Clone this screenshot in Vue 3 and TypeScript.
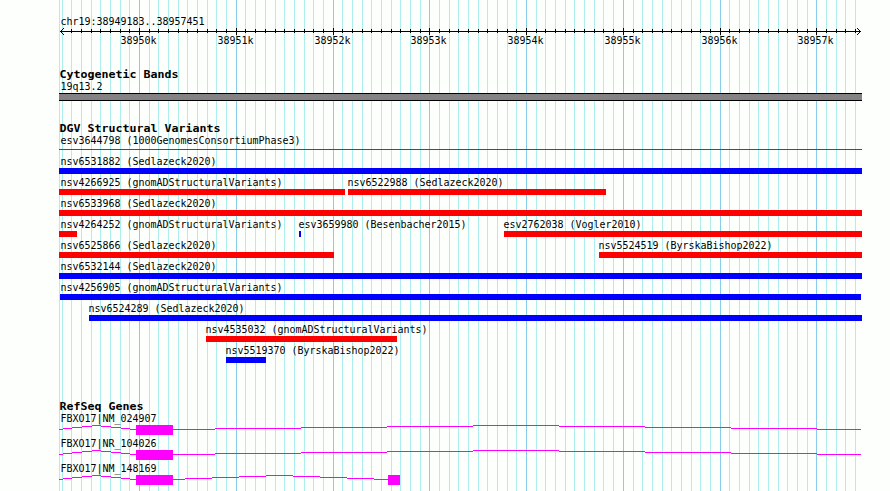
<script setup lang="ts">
interface Feature {
  label: string
  start: number
  end: number
  color: string
}

interface Gene {
  label: string
  exons: [number, number][]
  introns: [number, number][]
}

const regionStart = 38949183
const regionEnd = 38957451
const left = 60
const scale = 800 / (regionEnd - regionStart)

const toX = (pos: number) => Math.round(left + (pos - regionStart) * scale)

const ticks: { x: number; major: boolean; label: string }[] = []
for (let pos = 38949200; pos <= regionEnd; pos += 100) {
  ticks.push({ x: toX(pos), major: pos % 1000 === 0, label: `${pos / 1000}k` })
}
const majorTicks = ticks.filter((t) => t.major)

const BLUE = '#0000ff'
const RED = '#ff0000'

const variantRows: Feature[][] = [
  [{ label: 'nsv6531882 (Sedlazeck2020)', start: 59, end: 862, color: BLUE }],
  [
    { label: 'nsv4266925 (gnomADStructuralVariants)', start: 59, end: 345, color: RED },
    { label: 'nsv6522988 (Sedlazeck2020)', start: 348, end: 606, color: RED },
  ],
  [{ label: 'nsv6533968 (Sedlazeck2020)', start: 59, end: 862, color: RED }],
  [
    { label: 'nsv4264252 (gnomADStructuralVariants)', start: 59, end: 77, color: RED },
    { label: 'esv3659980 (Besenbacher2015)', start: 299, end: 301, color: BLUE },
    { label: 'esv2762038 (Vogler2010)', start: 504, end: 862, color: RED },
  ],
  [
    { label: 'nsv6525866 (Sedlazeck2020)', start: 59, end: 334, color: RED },
    { label: 'nsv5524519 (ByrskaBishop2022)', start: 599, end: 862, color: RED },
  ],
  [{ label: 'nsv6532144 (Sedlazeck2020)', start: 59, end: 862, color: BLUE }],
  [{ label: 'nsv4256905 (gnomADStructuralVariants)', start: 60, end: 861, color: BLUE }],
  [{ label: 'nsv6524289 (Sedlazeck2020)', start: 89, end: 862, color: BLUE }],
  [{ label: 'nsv4535032 (gnomADStructuralVariants)', start: 206, end: 397, color: RED }],
  [{ label: 'nsv5519370 (ByrskaBishop2022)', start: 226, end: 266, color: BLUE }],
]

const genes: Gene[] = [
  { label: 'FBXO17|NM_024907', exons: [[136, 173]], introns: [[59, 136], [173, 861]] },
  { label: 'FBXO17|NR_104026', exons: [[136, 173]], introns: [[59, 136], [173, 861]] },
  { label: 'FBXO17|NM_148169', exons: [[136, 173], [388, 400]], introns: [[59, 136], [173, 388]] },
]

const labelX = (f: Feature) => (f.start <= 60 ? 60.5 : f.start - 0.5)

// introns are drawn as a shallow hat, 4px high, in whole pixel steps
const hat = ([from, to]: [number, number], base: number) => {
  const half = (to - from) / 2
  const levels = [0, 1, 2, 3, 4, 3, 2, 1, 0]
  let x = from
  return levels
    .map((level, i) => {
      const next = i === 8 ? to : Math.round(from + (half * (2 * i + 1)) / 8) - 1
      const d = `M${x} ${base - level}H${next}`
      x = next
      return d
    })
    .join('')
}
</script>

<template>
  <main class="browser">
    <svg class="grid" width="890" height="491">
      <rect class="minor" x="59" y="0" width="1" height="491" />
      <rect
        v-for="t in ticks"
        :key="t.x"
        :class="t.major ? 'major' : 'minor'"
        :x="t.x"
        y="0"
        width="1"
        height="491"
      />
    </svg>

    <div class="tracks">
      <svg class="ruler" width="890" height="66">
        <text x="60.5" y="25" textLength="144" lengthAdjust="spacingAndGlyphs">chr19:38949183..38957451</text>
        <g class="axis">
          <rect x="60" y="31" width="801" height="1" />
          <rect
            v-for="t in ticks.slice(1)"
            :key="t.x"
            :x="t.x"
            :y="t.major ? 28 : 29"
            width="1"
            :height="t.major ? 7 : 4"
          />
          <g v-for="d in [1, 2, 3]" :key="d">
            <rect :x="60 + d" :y="31 - d" width="1" height="1" />
            <rect :x="60 + d" :y="31 + d" width="1" height="1" />
            <rect :x="860 - d" :y="31 - d" width="1" height="1" />
            <rect :x="860 - d" :y="31 + d" width="1" height="1" />
          </g>
        </g>
        <text
          v-for="t in majorTicks"
          :key="t.label"
          :x="t.x - 18.5"
          y="44"
          textLength="36"
          lengthAdjust="spacingAndGlyphs"
        >{{ t.label }}</text>
      </svg>

      <section class="track cytoband">
        <svg width="890" height="54">
          <text class="title" x="59.5" y="12" textLength="119" lengthAdjust="spacingAndGlyphs">Cytogenetic Bands</text>
          <text x="60.5" y="24" textLength="42" lengthAdjust="spacingAndGlyphs">19q13.2</text>
          <rect x="59" y="27" width="803" height="8" fill="#000" />
          <rect x="59" y="28" width="803" height="6" fill="#848284" />
        </svg>
      </section>

      <section class="track variants">
        <svg width="890" height="33">
          <text class="title" x="59.5" y="12" textLength="161" lengthAdjust="spacingAndGlyphs">DGV Structural Variants</text>
          <text x="60.5" y="24" textLength="240" lengthAdjust="spacingAndGlyphs">esv3644798 (1000GenomesConsortiumPhase3)</text>
          <rect x="59" y="29" width="803" height="1" fill="#d81018" />
        </svg>
        <svg v-for="(row, i) in variantRows" :key="i" width="890" height="21">
          <g v-for="f in row" :key="f.label">
            <text
              :x="labelX(f)"
              y="12"
              :textLength="f.label.length * 6"
              lengthAdjust="spacingAndGlyphs"
            >{{ f.label }}</text>
            <rect :x="f.start" y="15" :width="f.end - f.start" height="6" :fill="f.color" />
          </g>
        </svg>
      </section>

      <section class="track genes">
        <svg width="890" height="13">
          <text class="title" x="59.5" y="12" textLength="84" lengthAdjust="spacingAndGlyphs">RefSeq Genes</text>
        </svg>
        <svg v-for="g in genes" :key="g.label" width="890" height="25">
          <text x="60.5" y="11" textLength="96" lengthAdjust="spacingAndGlyphs">{{ g.label }}</text>
          <path v-for="n in g.introns" :key="n[0]" class="intron" :d="hat(n, 18.5)" />
          <rect
            v-for="e in g.exons"
            :key="e[0]"
            class="exon"
            :x="e[0]"
            y="14"
            :width="e[1] - e[0]"
            height="10"
          />
        </svg>
      </section>
    </div>
  </main>
</template>

<style>
body {
  margin: 0;
  background: #fdfffc;
}
</style>

<style scoped>
.browser {
  display: grid;
  width: 890px;
  height: 491px;
  overflow: hidden;
}
.grid,
.tracks {
  grid-area: 1 / 1;
}
.tracks {
  display: flex;
  flex-direction: column;
}
.track {
  display: flex;
  flex-direction: column;
}
.genes {
  margin-top: 35px;
}
svg {
  display: block;
  flex: none;
  overflow: visible;
  shape-rendering: crispEdges;
}
text {
  font-family: "DejaVu Sans Mono", monospace;
  font-size: 11px;
  fill: #000;
  white-space: pre;
}
.title {
  font-weight: bold;
}
.minor {
  fill: #afeeee;
}
.major {
  fill: #87ceeb;
}
.intron {
  fill: none;
  stroke: #ff00ff;
  stroke-width: 1;
}
.exon {
  fill: #ff00ff;
}
</style>
